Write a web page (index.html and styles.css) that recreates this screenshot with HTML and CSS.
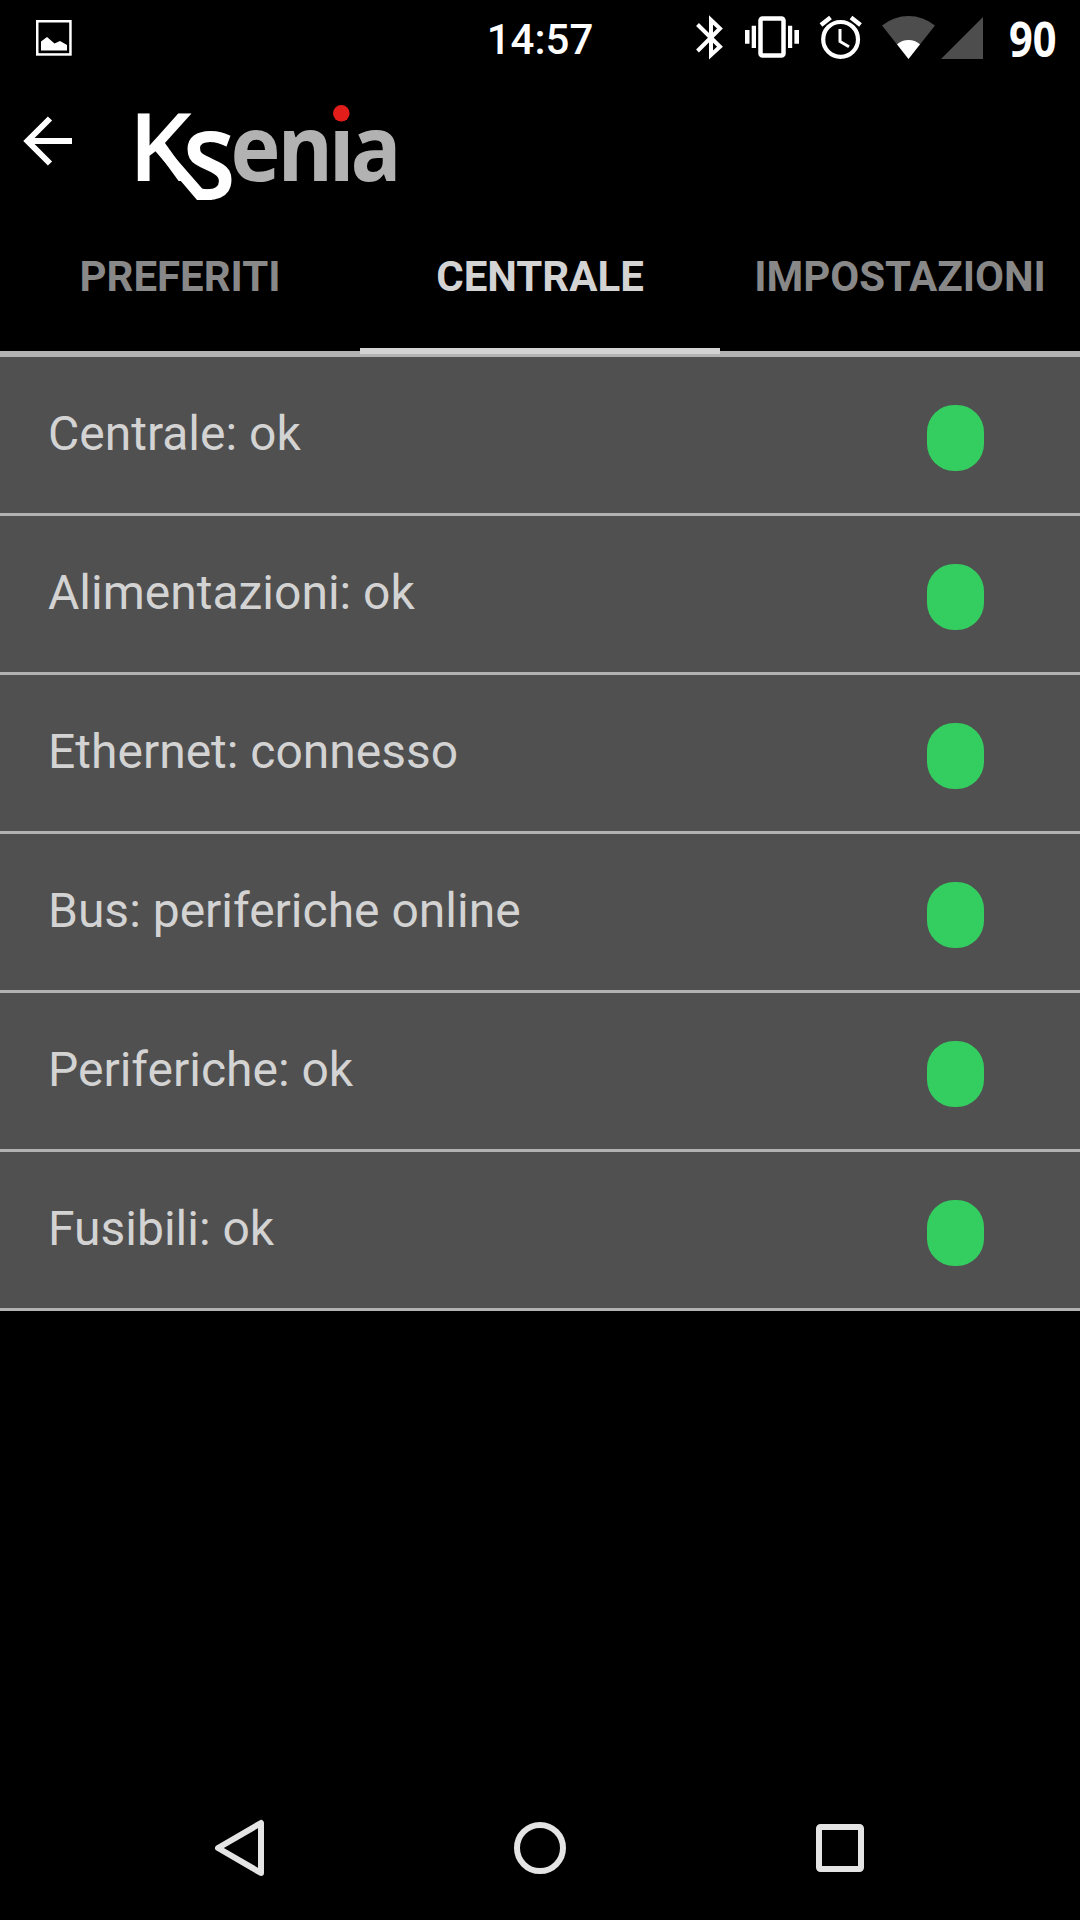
FILE: index.html
```html
<!DOCTYPE html>
<html lang="it">
<head>
  <meta charset="UTF-8">
  <title>Ksenia</title>
  <meta name="viewport" content="width=device-width, initial-scale=1.0">
  <link rel="stylesheet" href="styles.css">
</head>
<body>

  <!-- Status bar -->
  <div class="status-bar">
    <div class="status-left">
      <svg width="36" height="36" viewBox="0 0 36 36">
        <rect x="1.25" y="1.25" width="33.2" height="33.2" fill="none" stroke="#fff" stroke-width="2.5"/>
        <path d="M5 30.5V21.5L11 17L18.5 23.5L24 21L31 25V30.5Z" fill="#fff"/>
      </svg>
    </div>
    <div class="clock">14:57</div>
    <div class="status-right">
      <svg width="28" height="75" viewBox="696 0 28 75">
        <path d="M697.5 24.5L720 46.8L711 55V20L720 28.5L697.5 51" fill="none" stroke="#fff" stroke-width="4"/>
      </svg>
      <svg width="54" height="75" viewBox="745 0 54 75">
        <rect x="760.5" y="18.5" width="23" height="37" rx="2" fill="none" stroke="#fff" stroke-width="4.5"/>
        <path d="M751.7 25.7h4.3v22.3h-4.3zM745 30h4.5v13.7H745zM788 25.7h4.2v22.3H788zM794.4 30h4.6v13.7h-4.6z" fill="#fff"/>
      </svg>
      <svg width="42" height="75" viewBox="820 0 42 75">
        <circle cx="840.6" cy="39.4" r="17.4" fill="none" stroke="#fff" stroke-width="4.2"/>
        <path d="M840 29V41.5L849 46.7" fill="none" stroke="#fff" stroke-width="3"/>
        <path d="M821 25L830.5 17.5M851 17.5L860.5 25" fill="none" stroke="#fff" stroke-width="4.4"/>
      </svg>
      <svg width="54" height="75" viewBox="882 0 54 75">
        <path d="M908.5 59L882 25.5Q894 16 908.5 16T935 25.5Z" fill="#4d4d4d"/>
        <path d="M908.5 59L897 44.3Q902 40 908.5 40T920 44.3Z" fill="#fff"/>
      </svg>
      <svg width="42" height="75" viewBox="941 0 42 75">
        <path d="M941 59H983V17Z" fill="#4d4d4d"/>
      </svg>
      <svg class="battery" width="50" height="75" viewBox="0 0 50 75">
        <text x="-1" y="56.8" textLength="47.5" lengthAdjust="spacingAndGlyphs">90</text>
      </svg>
    </div>
  </div>

  <!-- Toolbar -->
  <div class="toolbar">
    <svg class="back" width="48" height="50" viewBox="24 116 48 50">
      <path d="M50 118.5L27.5 141L50 163.5M28 141H72" fill="none" stroke="#fff" stroke-width="6"/>
    </svg>
    <svg class="logo" width="264" height="100" viewBox="136 102 264 100">
      <clipPath id="s-clip">
        <path d="M180 120H240V205H205L183 178Z"/>
      </clipPath>
      <clipPath id="rest-clip">
        <path d="M226 128H400V190H226Z"/>
      </clipPath>
      <text class="logo-k" transform="translate(128.5 181) scale(1.06 1)">K</text>
      <path d="M151 146H165L203 189.5H212V200H197Z" fill="#fff"/>
      <g clip-path="url(#s-clip)">
        <text class="logo-s" transform="translate(182.3 198.5) scale(.89 1)">s</text>
      </g>
      <g clip-path="url(#rest-clip)">
        <text class="logo-rest" transform="scale(.93 1)" x="247.8 298.4 353.6 376.9" y="181">enia</text>
      </g>
      <circle cx="341.3" cy="113.3" r="8.3" fill="#e31e1a"/>
    </svg>
  </div>

  <!-- Tabs -->
  <div class="tabs">
    <div class="tab">PREFERITI</div>
    <div class="tab active">CENTRALE</div>
    <div class="tab">IMPOSTAZIONI</div>
  </div>

  <!-- System state -->
  <div class="list">
    <div class="row"><span>Centrale: ok</span><div class="led"></div></div>
    <div class="row"><span>Alimentazioni: ok</span><div class="led"></div></div>
    <div class="row"><span>Ethernet: connesso</span><div class="led"></div></div>
    <div class="row"><span>Bus: periferiche online</span><div class="led"></div></div>
    <div class="row"><span>Periferiche: ok</span><div class="led"></div></div>
    <div class="row"><span>Fusibili: ok</span><div class="led"></div></div>
  </div>

  <!-- Navigation bar -->
  <div class="nav-bar">
    <svg width="60" height="60" viewBox="0 0 60 60">
      <path d="M8 30L51 5V55Z"/>
    </svg>
    <svg width="60" height="60" viewBox="0 0 60 60">
      <circle cx="30" cy="30" r="23"/>
    </svg>
    <svg width="60" height="60" viewBox="0 0 60 60">
      <rect x="9" y="9" width="42" height="42" rx="1.5"/>
    </svg>
  </div>

</body>
</html>
```

FILE: styles.css
```css
* {
  box-sizing: border-box;
}

body {
  display: flex;
  flex-direction: column;
  height: 1920px;
  margin: 0;
  background: #000;
  color: #d3d3d3;
  font-family: Roboto, "Liberation Sans", sans-serif;
  overflow: hidden;
}

svg {
  display: block;
  flex: none;
  overflow: visible;
}

/* Status bar */
.status-bar {
  display: grid;
  grid-template-columns: 1fr auto 1fr;
  align-items: center;
  height: 75px;
  padding: 0 20px 0 36px;
}

.clock {
  width: 108px;
  margin-left: -16px;
  color: #fff;
  font-size: 42px;
  font-weight: 500;
  line-height: 71px;
  text-align: center;
  padding-top: 4px;
}

.status-right {
  display: flex;
  justify-content: flex-end;
}

.status-right svg + svg {
  margin-left: 21px;
}

.status-right svg:nth-child(4) {
  margin-left: 20px;
}

.status-right svg:nth-child(5) {
  margin-left: 5px;
}

.status-right .battery {
  margin-left: 27px;
}

.battery text {
  fill: #fff;
  font-family: "Open Sans", "Noto Sans", sans-serif;
  font-size: 48px;
  font-weight: 700;
}

/* Toolbar */
.toolbar {
  display: flex;
  align-items: flex-start;
  height: 138px;
  padding-left: 24px;
}

.back {
  margin-top: 41px;
}

.logo {
  margin-top: 27px;
  margin-left: 64px;
}

.logo text {
  font-family: "Open Sans", "Noto Sans", sans-serif;
  font-weight: 600;
}

.logo .logo-k {
  fill: #fff;
  font-size: 94px;
}

.logo .logo-s {
  fill: #fff;
  font-size: 124px;
}

.logo .logo-rest {
  fill: #b2b2b2;
  font-size: 91px;
  font-weight: 700;
}

/* Tabs */
.tabs {
  display: flex;
  height: 144px;
  border-bottom: 6px solid #b2b2b2;
}

.tab {
  flex: 1;
  height: 141px;
  padding-top: 39px;
  color: #888;
  font-size: 42px;
  font-weight: 700;
  line-height: 50px;
  text-align: center;
}

.tab.active {
  color: #d3d3d3;
  border-bottom: 6px solid #d3d3d3;
}

/* List */
.row {
  display: flex;
  align-items: center;
  justify-content: space-between;
  height: 159px;
  padding: 0 96px 0 48px;
  background: #505050;
  border-bottom: 3px solid #b2b2b2;
  font-size: 48px;
}

.row span {
  line-height: 56px;
  padding-bottom: 2px;
}

.led {
  width: 57px;
  height: 66px;
  margin-top: 6px;
  border-radius: 27px;
  background: #34cd60;
}

/* Navigation bar */
.nav-bar {
  display: flex;
  justify-content: center;
  align-items: center;
  gap: 240px;
  height: 144px;
  margin-top: auto;
}

.nav-bar svg {
  fill: none;
  stroke: #e4e4e4;
  stroke-width: 6;
  stroke-linejoin: round;
}
```
